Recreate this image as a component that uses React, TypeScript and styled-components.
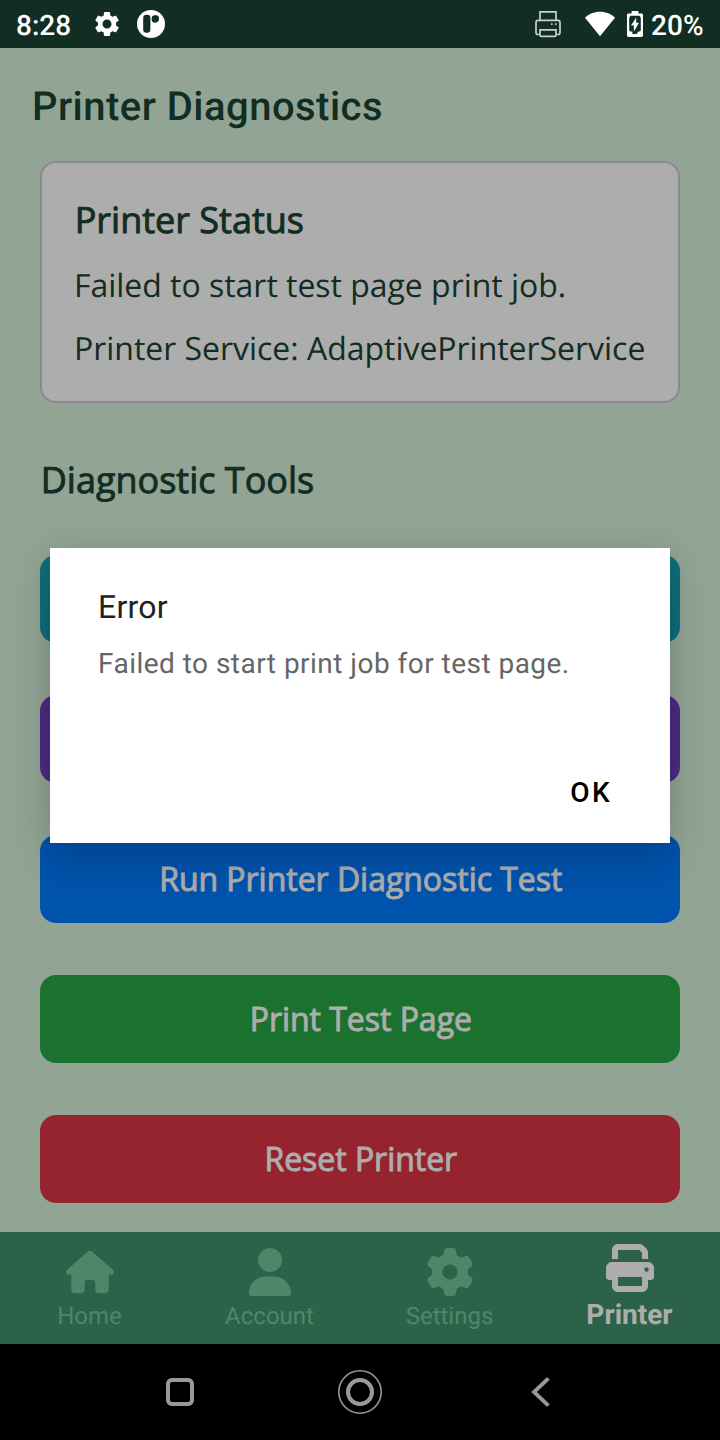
import React from 'react';
import styled, { createGlobalStyle } from 'styled-components';
import { FaGear, FaHouse, FaPrint, FaUser } from 'react-icons/fa6';
import { MdSettings } from 'react-icons/md';

const GlobalStyle = createGlobalStyle`
  *, *::before, *::after { box-sizing: border-box; }
  body { margin: 0; background: #000; }
  h1, h2, p { margin: 0; }
  button { border: 0; padding: 0; font: inherit; }
`;

const Screen = styled.div`
  position: relative;
  display: flex;
  flex-direction: column;
  width: 720px;
  height: 1440px;
  overflow: hidden;
  background: #d8f3dc;
  color: #1b4332;
  font-family: Roboto, sans-serif;
  text-rendering: geometricPrecision;
`;

const StatusBar = styled.div`
  display: flex;
  align-items: center;
  height: 48px;
  padding: 3px 16.5px 0 16px;
  color: #fff;
  font-size: 28px;
  font-weight: 500;
  line-height: 33px;
`;

const StatusIcons = styled.div`
  display: flex;
  align-items: center;
  height: 28px;
  margin: -3px 0 0 auto;
`;

const StatusLeft = styled.div`
  display: flex;
  align-items: center;
  gap: 15px;
  height: 30px;
  margin: -3px 0 0 21px;
`;

const BatteryText = styled.span`
  margin-left: 8px;
`;

const Header = styled.header`
  height: 113px;
  padding: 35px 32px 0;
`;

const Title = styled.h1`
  font-size: 40px;
  font-weight: 500;
  line-height: 48px;
  letter-spacing: 0.47px;
`;

const Content = styled.main`
  display: flex;
  flex-direction: column;
  height: 1071px;
  padding: 0 40px;
  font-family: 'Open Sans', sans-serif;
`;

const Card = styled.section`
  display: flex;
  flex-direction: column;
  gap: 19px;
  height: 242px;
  padding: 32px 0 0 32px;
  border: 2px solid #ccc;
  border-radius: 16px;
  background: #fff;
`;

const Heading = styled.h2`
  padding-left: 0.7px;
  font-size: 36px;
  font-weight: 400;
  line-height: 49px;
  -webkit-text-stroke: 0.9px currentColor;
`;

const CardText = styled.p`
  padding-top: 1px;
  font-size: 32px;
  line-height: 44px;
  letter-spacing: -0.03px;
  white-space: nowrap;

  & + & {
    margin-top: -1px;
  }
`;

const Tools = styled.section`
  display: flex;
  flex-direction: column;
  margin-top: 52px;
`;

const ButtonList = styled.div`
  display: flex;
  flex-direction: column;
  gap: 52px;
  margin-top: 51px;
`;

const ToolButton = styled.button<{ $color: string }>`
  height: 88px;
  padding-left: 1.6px;
  border-radius: 16px;
  background: ${({ $color }) => $color};
  color: #fff;
  font-size: 32px;
  font-weight: 400;
  line-height: 44px;
  letter-spacing: -0.03px;
  -webkit-text-stroke: 0.9px currentColor;
`;

const TabBar = styled.nav`
  display: grid;
  grid-template-columns: repeat(4, 1fr);
  height: 112px;
  background: #40916c;
`;

const Tab = styled.div<{ $active?: boolean }>`
  display: flex;
  flex-direction: column;
  align-items: center;
  gap: 6px;
  padding-top: ${({ $active }) => ($active ? 12 : 16)}px;
  color: ${({ $active }) => ($active ? '#fff' : '#74c69d')};
  font-size: ${({ $active }) => ($active ? 28 : 24)}px;
  font-weight: ${({ $active }) => ($active ? 700 : 400)};
  line-height: ${({ $active }) => ($active ? 33 : 28)}px;
`;

const TabLabel = styled.span`
  padding-right: 1px;
`;

const SystemNav = styled.div`
  display: grid;
  grid-template-columns: repeat(3, 180px);
  justify-content: center;
  place-items: center;
  height: 96px;
  background: #000;
`;

const Scrim = styled.div`
  position: absolute;
  inset: 0;
  display: flex;
  flex-direction: column;
  background: rgba(0, 0, 0, 0.32);
`;

const StatusBackground = styled.div`
  flex: none;
  height: 48px;
  background: #1b4332;
`;

const StatusSpace = styled.div`
  flex: none;
  height: 48px;
`;

const DialogArea = styled.div`
  display: flex;
  align-items: center;
  justify-content: center;
  height: 1296px;
  padding-bottom: 1px;
`;

const Dialog = styled.div`
  display: flex;
  flex-direction: column;
  width: 620px;
  height: 295px;
  padding: 40px 48px 33px;
  background: #fff;
  box-shadow: 0 18px 40px rgba(0, 0, 0, 0.16), 0 0 32px rgba(0, 0, 0, 0.07);
`;

const DialogTitle = styled.h2`
  color: #212121;
  font-size: 32px;
  font-weight: 400;
  line-height: 38px;
  letter-spacing: 0.25px;
`;

const DialogText = styled.p`
  margin-top: 21px;
  color: #666;
  font-size: 28px;
  line-height: 34px;
  letter-spacing: 0.47px;
`;

const DialogButton = styled.button`
  align-self: flex-end;
  margin: auto 10px 0 0;
  background: none;
  color: #000;
  font-size: 28px;
  font-weight: 500;
  line-height: 34px;
  letter-spacing: 2.4px;
`;

const SystemLayer = styled.div`
  position: absolute;
  inset: 0 0 auto;
`;

const Spacer = styled.span<{ $width: number }>`
  width: ${({ $width }) => $width}px;
`;

const AppBadgeIcon = () => (
  <svg width="28" height="28" viewBox="0 0 28 28">
    <circle cx="14" cy="14" r="14" fill="#fff" />
    <rect x="6.2" y="4.8" width="7.2" height="18" rx="3.2" fill="#122e22" />
    <path d="M14.7 8.2Q14.7 5.2 17.8 5.2H19.4Q22 5.6 22 8.6Q22 12.7 18.4 12.7Q14.7 12.7 14.7 9.5Z" fill="#122e22" />
  </svg>
);

const PrinterOutlineIcon = () => (
  <svg width="28" height="28" viewBox="0 0 28 28" fill="none" stroke="#c9d0cc" strokeWidth="1.7">
    <path d="M6 10V1.8H22V10" />
    <path d="M6 24.5H4Q2 24.5 2 22.5V12.5Q2 10.4 4 10.4H24Q26 10.4 26 12.5V22.5Q26 24.5 24 24.5H22" />
    <path d="M6 19.8H22V25Q22 26.4 20.6 26.4H7.4Q6 26.4 6 25Z" />
    <path d="M17 14.2h1.6M21 14.2h1.6" />
  </svg>
);

const WifiIcon = () => (
  <svg width="30" height="26" viewBox="0 0 30 26" fill="#fff">
    <path d="M15 25.3L0 6.7C3.6 3 9 .7 15 .7S26.4 3 30 6.7Z" />
  </svg>
);

const BatteryIcon = () => (
  <svg width="16" height="26" viewBox="0 0 16 26">
    <path d="M4.6 0H11.4V2.4H14.6Q16 2.4 16 3.8V24.6Q16 26 14.6 26H1.4Q0 26 0 24.6V3.8Q0 2.4 1.4 2.4H4.6Z" fill="#fff" />
    <path d="M3.4 4.8H12.6L13.8 7V19.4L12.6 20.6H11.4L9.6 23H5.4V20.6H3.4L2.2 19.4V7Z" fill="#122e22" />
    <path d="M9.2 6.4V11.8H12L6.9 20.6V14.6H4Z" fill="#fff" />
  </svg>
);

const RecentsIcon = () => (
  <svg width="28" height="28" viewBox="0 0 28 28" fill="none" stroke="#999" strokeWidth="4">
    <rect x="2" y="2" width="24" height="24" rx="3.8" />
  </svg>
);

const HomeIcon = () => (
  <svg width="44" height="44" viewBox="0 0 44 44" fill="none" stroke="#999">
    <circle cx="22" cy="22" r="21.2" strokeWidth="1.6" />
    <circle cx="22" cy="22" r="12" strokeWidth="4" />
  </svg>
);

const BackIcon = () => (
  <svg width="20" height="30" viewBox="0 0 20 30" fill="none" stroke="#999" strokeWidth="3.8">
    <path d="M18.4 1.4L4 15L18.4 28.6" />
  </svg>
);

const tools = [
  { color: '#17a2b8', label: '' },
  { color: '#6f42c1', label: '' },
  { color: '#007bff', label: 'Run Printer Diagnostic Test' },
  { color: '#28a745', label: 'Print Test Page' },
  { color: '#dc3545', label: 'Reset Printer' },
];

const tabs = [
  { label: 'Home', Icon: FaHouse },
  { label: 'Account', Icon: FaUser },
  { label: 'Settings', Icon: FaGear },
  { label: 'Printer', Icon: FaPrint, active: true },
];

export default function App() {
  return (
    <>
      <GlobalStyle />
      <Screen>
        <StatusBackground />
        <Header>
          <Title>Printer Diagnostics</Title>
        </Header>
        <Content>
          <Card>
            <Heading>Printer Status</Heading>
            <CardText>Failed to start test page print job.</CardText>
            <CardText>Printer Service: AdaptivePrinterService</CardText>
          </Card>
          <Tools>
            <Heading>Diagnostic Tools</Heading>
            <ButtonList>
              {tools.map((tool) => (
                <ToolButton key={tool.color} $color={tool.color}>
                  {tool.label}
                </ToolButton>
              ))}
            </ButtonList>
          </Tools>
        </Content>
        <TabBar>
          {tabs.map(({ label, Icon, active }) => (
            <Tab key={label} $active={active}>
              <Icon size={48} />
              <TabLabel>{label}</TabLabel>
            </Tab>
          ))}
        </TabBar>
        <Scrim>
          <StatusSpace />
          <DialogArea>
            <Dialog role="alertdialog">
              <DialogTitle>Error</DialogTitle>
              <DialogText>Failed to start print job for test page.</DialogText>
              <DialogButton>OK</DialogButton>
            </Dialog>
          </DialogArea>
          <SystemNav>
            <RecentsIcon />
            <HomeIcon />
            <BackIcon />
          </SystemNav>
        </Scrim>
        <SystemLayer>
          <StatusBar>
            <span>8:28</span>
            <StatusLeft>
              <MdSettings size={30} />
              <AppBadgeIcon />
            </StatusLeft>
            <StatusIcons>
              <PrinterOutlineIcon />
              <Spacer $width={23} />
              <WifiIcon />
              <Spacer $width={12} />
              <BatteryIcon />
            </StatusIcons>
            <BatteryText>20%</BatteryText>
          </StatusBar>
        </SystemLayer>
      </Screen>
    </>
  );
}
